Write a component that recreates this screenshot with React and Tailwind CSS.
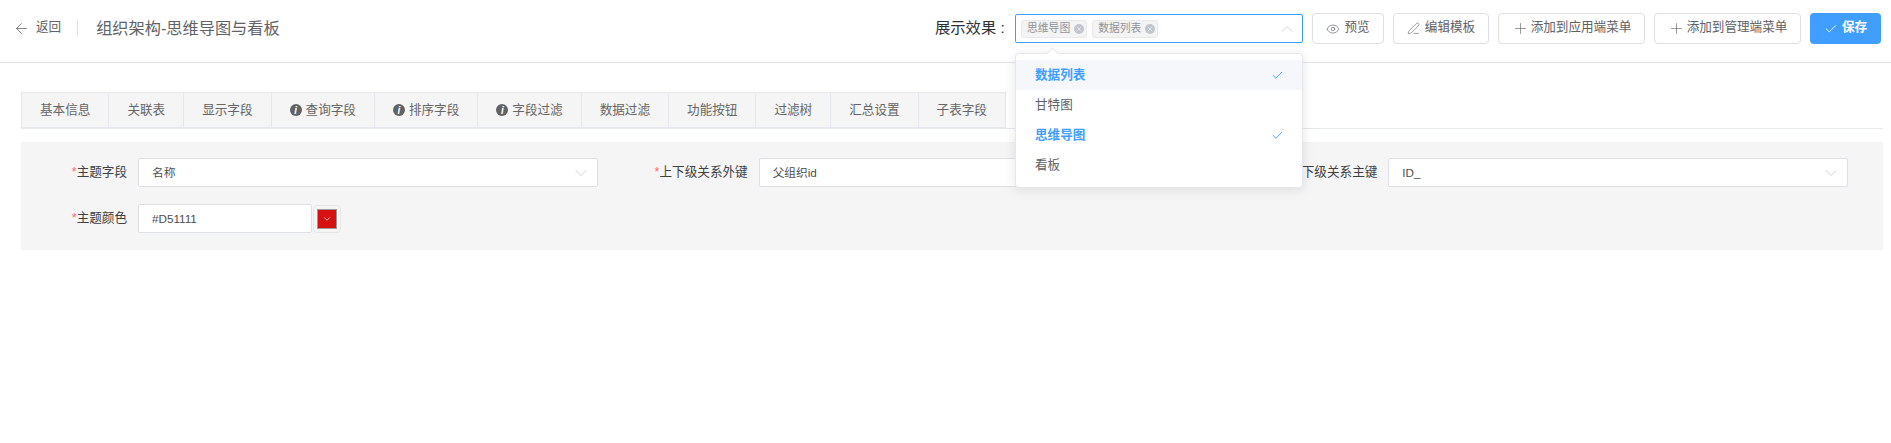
import React from 'react';
import { ArrowLeft, Eye, PenLine, Plus, Check, ChevronDown, ChevronUp, X } from 'lucide-react';

const font = { fontFamily: '"Liberation Sans", "Noto Sans CJK SC", sans-serif' };

const tabs = [
  { name: '基本信息' },
  { name: '关联表' },
  { name: '显示字段' },
  { name: '查询字段', info: true },
  { name: '排序字段', info: true },
  { name: '字段过滤', info: true },
  { name: '数据过滤' },
  { name: '功能按钮' },
  { name: '过滤树' },
  { name: '汇总设置' },
  { name: '子表字段' },
];

const options = [
  { name: '数据列表', selected: true, hover: true },
  { name: '甘特图' },
  { name: '思维导图', selected: true },
  { name: '看板' },
];

const Tag = ({ children }) => (
  <span className="flex items-center h-[18px] pl-[5px] pr-[2px] rounded-[3px] bg-[#f4f4f5] border border-[#e9e9eb] text-[10.8px] text-[#909399]">
    {children}
    <span className="ml-[4px] flex items-center justify-center w-[10px] h-[10px] rounded-full bg-[#c0c4cc] text-[#f4f4f5]">
      <X size={8} strokeWidth={2} />
    </span>
  </span>
);

const HeaderButton = ({ icon, children, className }) => (
  <button className={`flex items-center justify-center h-[31px] rounded-[4px] border border-[#dcdfe6] bg-white text-[12.6px] text-[#606266] ${className}`}>
    {icon}
    <span className="mb-[2px]">{children}</span>
  </button>
);

const Field = ({ label, value, labelWidth }) => (
  <div className="flex items-center">
    <label className="shrink-0 pr-[11px] text-right text-[12.6px] text-[#404040]" style={{ width: labelWidth }}>
      <span className="text-[#f56c6c]">*</span>
      {label}
    </label>
    <div className="flex items-center justify-between w-[460px] h-[29px] pl-[13px] pr-[6px] rounded-[2px] border border-[#dcdfe6] bg-white text-[11.7px] text-[#4d4d4d]">
      <span>{value}</span>
      <ChevronDown size={20} strokeWidth={0.9} className="text-[#c0c4cc]" />
    </div>
  </div>
);

export default function App() {
  return (
    <div className="min-h-screen bg-white" style={font}>
      <header className="flex items-center justify-between h-[63px] pb-[5px] pl-[13px] pr-[10px] border-b border-[#e4e4e4]">
        <div className="flex items-center">
          <ArrowLeft size={17} strokeWidth={1.1} className="text-[#606266]" />
          <span className="ml-[6px] mb-[3px] text-[12.6px] text-[#606266]">返回</span>
          <span className="ml-[16px] mr-[18px] w-px h-[16px] bg-[#dcdfe6]"></span>
          <span className="text-[16.2px] text-[#606266]">组织架构-思维导图与看板</span>
        </div>

        <div className="flex items-center">
          <span className="w-[80px] text-[15.3px] text-[#303133]">展示效果 :</span>
          <div className="relative z-10">
            <div className="flex items-center gap-[5px] w-[288px] h-[29px] pl-[5px] pr-[5px] rounded-[2px] border border-[#409eff] bg-white">
              <Tag>思维导图</Tag>
              <Tag>数据列表</Tag>
              <ChevronUp size={20} strokeWidth={0.9} className="ml-auto text-[#c0c4cc]" />
            </div>

            <div className="absolute top-[39px] left-0 w-[288px] h-[135px] pt-[6px] rounded-[4px] border border-[#e4e7ed] bg-white shadow-[0_2px_12px_0_rgba(0,0,0,0.1)]">
              <span className="absolute -top-[5px] left-[32px] w-[9px] h-[9px] rotate-45 border-l border-t border-[#e4e7ed] bg-white"></span>
              {options.map((o) => (
                <div
                  key={o.name}
                  className={`relative flex items-center justify-between h-[30px] pl-[19px] pr-[18px] text-[12.6px] ${o.hover ? 'bg-[#f5f7fa]' : ''} ${o.selected ? 'font-bold text-[#409eff]' : 'text-[#606266]'}`}
                >
                  <span>{o.name}</span>
                  {o.selected && <Check size={13} strokeWidth={1.75} />}
                </div>
              ))}
            </div>
          </div>

          <div className="flex items-center gap-[9px] ml-[9px]">
            <HeaderButton className="w-[72px]" icon={<Eye size={14} strokeWidth={1.1} className="mr-[4px]" />}>预览</HeaderButton>
            <HeaderButton className="w-[96px]" icon={<PenLine size={13} strokeWidth={1.1} className="mr-[5px]" />}>编辑模板</HeaderButton>
            <HeaderButton className="w-[147px]" icon={<Plus size={17} strokeWidth={0.9} className="mr-[2px]" />}>添加到应用端菜单</HeaderButton>
            <HeaderButton className="w-[147px]" icon={<Plus size={17} strokeWidth={0.9} className="mr-[2px]" />}>添加到管理端菜单</HeaderButton>
            <button className="flex items-center justify-center w-[71px] h-[31px] rounded-[4px] bg-[#409eff] text-[12.6px] font-bold text-white">
              <Check size={14} strokeWidth={1.5} className="mr-[4px]" />
              <span className="mb-[2px]">保存</span>
            </button>
          </div>
        </div>
      </header>

      <main className="pt-[29px] pl-[21px] pr-[8px]">
        <div className="flex h-[37px] border-b border-[#e4e7ed]">
          <div className="flex border-l border-t border-[#e4e7ed] bg-[#f5f5f5]">
            {tabs.map((t) => (
              <div key={t.name} className="flex items-center px-[18px] border-r border-b border-[#e4e7ed] text-[12.6px] text-[#666666] whitespace-nowrap">
                {t.info && (
                  <span className="flex items-center justify-center w-[12px] h-[12px] mr-[4px] rounded-full bg-[#606266] text-[10px] font-bold italic text-white">i</span>
                )}
                {t.name}
              </div>
            ))}
          </div>
        </div>

        <div className="mt-[13px] h-[108px] pt-[16px] bg-[#f5f5f5]">
          <div className="grid grid-cols-3">
            <Field label="主题字段" value="名称" labelWidth={117} />
            <Field label="上下级关系外键" value="父组织id" labelWidth={117} />
            <Field label="上下级关系主键" value="ID_" labelWidth={126} />
          </div>
          <div className="flex items-center mt-[17px]">
            <label className="shrink-0 w-[117px] pr-[11px] text-right text-[12.6px] text-[#404040]">
              <span className="text-[#f56c6c]">*</span>主题颜色
            </label>
            <div className="flex items-center w-[174px] h-[29px] pl-[13px] rounded-[2px] border border-[#dcdfe6] bg-white text-[11.7px] text-[#4d4d4d]">#D51111</div>
            <div className="flex items-center justify-center w-[28px] h-[28px] ml-px rounded-[4px] border border-[#e6e6e6]">
              <span className="flex items-center justify-center w-[20px] h-[20px] border border-[#999999] bg-[#d51111] text-white">
                <ChevronDown size={10} strokeWidth={1.75} />
              </span>
            </div>
          </div>
        </div>
      </main>
    </div>
  );
}
